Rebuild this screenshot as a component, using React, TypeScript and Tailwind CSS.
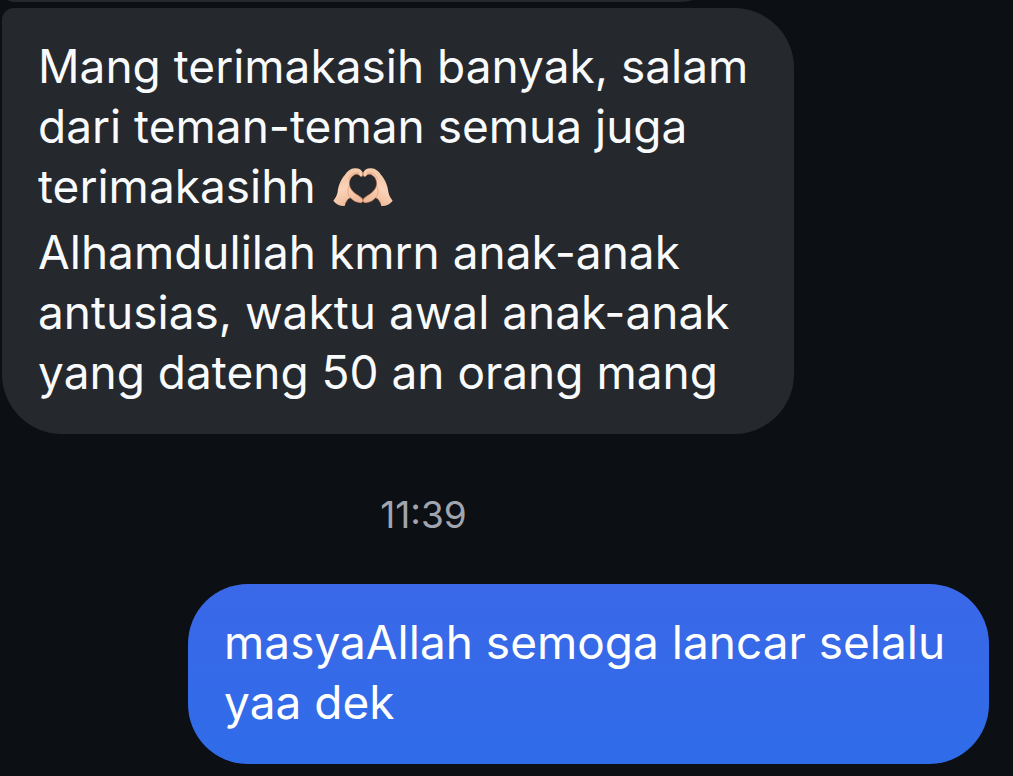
import type { ReactNode } from "react";
import clsx from "clsx";

type Message = {
    id: number;
    mine: boolean;
    paragraphs: ReactNode[];
};

function Hand() {
    return (
        <>
            <path
                d="M1 98 C7 91 12 82 14 72 C15 56 22 36 36 20 C44 9 52 2 65 1 C77 0 85 5 89 13 C92 21 88 29 82 25 C78 19 71 17 65 20 C54 25 49 36 49 47 C49 60 60 73 74 81 C83 87 90 91 90 97 C90 104 84 105 76 103 C66 101 59 96 52 89 C45 91 41 97 38 104 L35 114 C22 115 9 109 1 98 Z"
                fill="url(#skin)"
            />
            <path
                d="M89 13 C92 21 88 29 82 25 C78 19 71 17 65 20 C54 25 49 36 49 47 C49 60 60 73 74 81 C83 87 90 91 90 97"
                fill="none"
                stroke="#b96c48"
                strokeWidth="2"
            />
            <path d="M90 97 C90 104 84 105 76 103 C66 101 59 96 52 89 C45 91 41 97 38 104" fill="none" stroke="#d58c66" strokeWidth="2" />
            <path d="M46 33 C53 19 62 12 78 15 M48 55 C43 64 43 78 51 88" fill="none" stroke="#e5a986" strokeWidth="3" strokeLinecap="round" />
        </>
    );
}

function HeartHands() {
    return (
        <svg viewBox="0 0 180 117" role="img" aria-label="heart hands" className="ml-1 inline-block h-[39px] w-[60px] align-[-4px]">
            <defs>
                <linearGradient id="skin" x1="0" y1="0" x2="0.4" y2="1">
                    <stop offset="0" stopColor="#efc09f" />
                    <stop offset="0.6" stopColor="#fbd3b8" />
                    <stop offset="1" stopColor="#efb999" />
                </linearGradient>
            </defs>
            <Hand />
            <g transform="translate(180 0) scale(-1 1)">
                <Hand />
            </g>
        </svg>
    );
}

const messages: Message[] = [
    {
        id: 1,
        mine: false,
        paragraphs: [
            <>
                Mang terimakasih banyak, salam dari teman-teman semua juga terimakasihh <HeartHands />
            </>,
            "Alhamdulilah kmrn anak-anak antusias, waktu awal anak-anak yang dateng 50 an orang mang",
        ],
    },
    { id: 2, mine: true, paragraphs: ["masyaAllah semoga lancar selalu yaa dek"] },
];

function Bubble({ message }: { message: Message }) {
    return (
        <div
            className={clsx(
                "flex w-full flex-col gap-[6px] rounded-[60px] px-9 pt-7 pb-8 text-[46px] leading-[60px]",
                message.mine
                    ? "max-w-[801px] self-end bg-linear-to-b from-[#3a68e8] to-[#2f6ce9] text-white"
                    : "max-w-[792px] self-start rounded-tl-[12px] bg-[#25282d] text-[#f8fafc]",
            )}
        >
            {message.paragraphs.map((paragraph, i) => (
                <p key={i}>{paragraph}</p>
            ))}
        </div>
    );
}

function App() {
    const [received, sent] = messages;

    return (
        <main className="min-h-screen bg-[#0c0f14] font-['Inter','Liberation_Sans',sans-serif]">
            {/* tail of the previous message, scrolled out of view */}
            <div className="flex h-[2px] items-end overflow-hidden pl-[2px]">
                <div className="h-20 w-full max-w-[736px] shrink-0 rounded-br-[60px] rounded-bl-[12px] bg-[#25282d]" />
            </div>
            <div className="flex flex-col pt-[6px] pr-6 pb-3 pl-[2px]">
                <Bubble message={received} />
                <time className="pt-[66px] pr-[144px] pb-[54px] text-center text-[37px] leading-[30px] text-[#a0a5af]">11:39</time>
                <Bubble message={sent} />
            </div>
        </main>
    );
}

export default App;
